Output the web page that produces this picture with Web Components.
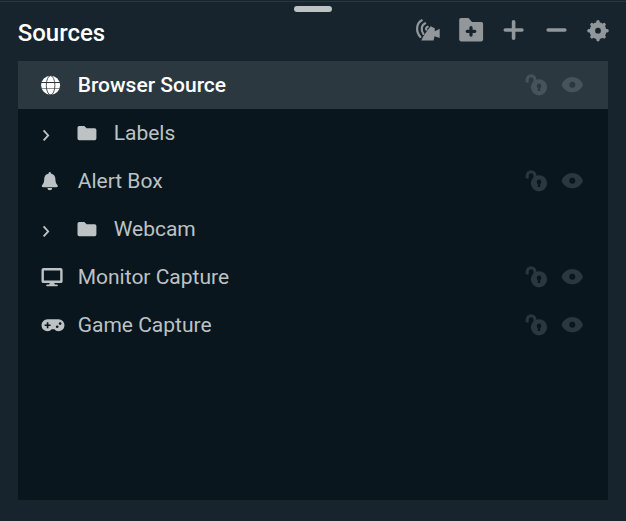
<!DOCTYPE html>
<html lang="en">
<head>
<meta charset="utf-8">
<title>Sources</title>
<style>
html,body{margin:0;height:100%;background:#17242d;overflow:hidden;font-family:Roboto,"Liberation Sans",sans-serif}
</style>
</head>
<body>
<sources-panel></sources-panel>
<script>
// Each entry: [width, height, markup]
const ICONS = {
  globe: [28,24,`<circle cx="12.6" cy="12.3" r="9.5" fill="currentColor"/><g fill="none" stroke="var(--cut)" stroke-width="1"><path d="M3 9.5h19.4"/><path d="M3 15.5h19.4" stroke-opacity=".55"/><ellipse cx="12.6" cy="12.3" rx="4.3" ry="9.6" stroke-opacity=".85"/></g>`],
  chevron: [24,24,`<path d="M5.6 9.400 10.200 14.400 5.600 19.400" fill="none" stroke="currentColor" stroke-width="1.8"/>`],
  folder: [28,24,`<path fill="currentColor" d="M5.2 5h5.1l2.4 2.200h8a1.700 1.700 0 0 1 1.700 1.700v8.600a1.700 1.700 0 0 1-1.700 1.700H5.200a1.700 1.700 0 0 1-1.700-1.700V6.700A1.700 1.700 0 0 1 5.200 5Z"/>`],
  bell: [28,24,`<path fill="currentColor" d="M10.700 4a1.100 1.100 0 0 1 2.200 0v.6c2.700.5 4.500 2.600 4.500 5.400 0 3.500.8 4.700 2 6 .9 1 .2 2.300-.9 2.300H5.100c-1.100 0-1.800-1.300-.9-2.300 1.200-1.300 2-2.500 2-6 0-2.800 1.800-4.900 4.500-5.400ZM9.400 18.900h4.800a2.400 2.300 0 0 1-4.800 0Z"/>`],
  monitor: [28,24,`<path fill="currentColor" fill-rule="evenodd" d="M5.400 3h17.300a1.900 1.900 0 0 1 1.900 1.900v11.300a1.900 1.900 0 0 1-1.900 1.900h-6.500l.6 1.500h2.200a.8.8 0 0 1 0 1.600H9a.8.8 0 0 1 0-1.600h2.200l.6-1.500H5.400a1.900 1.900 0 0 1-1.900-1.900V4.900A1.900 1.900 0 0 1 5.400 3Zm.5 2.400v10.200h16.300V5.400Z"/>`],
  gamepad: [28,24,`<path d="M9.500 6.200h11a6 6 0 0 1 0 12c-1.800 0-3.200-.7-4.200-1.900h-2.600c-1 1.200-2.400 1.900-4.200 1.900a6 6 0 0 1 0-12Z" fill="currentColor"/><g stroke="var(--cut)" stroke-width="1.600"><path d="M6.600 12.200h6M9.600 9.200v6"/></g><circle cx="19.200" cy="13.700" r="1.300" fill="var(--cut)"/><circle cx="22.100" cy="10.600" r="1.300" fill="var(--cut)"/>`],
  unlock: [24,24,`<path d="M3.200 9.400V6.600a3.900 3.900 0 0 1 7.800 0V9" fill="none" stroke="currentColor" stroke-width="3"/><circle cx="15" cy="14.300" r="8.100" fill="currentColor"/><circle cx="15" cy="12.900" r="2.300" fill="var(--cut)"/><path d="M14.100 13h1.800l.5 4.900h-2.800Z" fill="var(--cut)"/>`],
  eye: [24,24,`<path fill="currentColor" d="M1.600 11.700C3.300 7 7.500 4 12.300 4s9 3 10.700 7.700c-1.700 4.700-5.900 7.600-10.700 7.600s-9-2.900-10.700-7.600Z"/><circle cx="12.300" cy="11.700" r="3" fill="var(--cut)"/>`],
  cast: [28,28,`<g fill="none" stroke="currentColor" stroke-width="2.200" stroke-linecap="round"><path d="M7.800 4.300C1.900 7.700 1.700 15.900 6.400 20.900"/><path d="M11.200 7.300C7.200 9.200 6.700 14 9.400 17.800"/><path d="M13.700 10.800q-2.200.8-1.400 2.900"/></g><path fill="currentColor" d="M9.200 20.400 13.300 14.600 16.700 10.200 20.800 12.300V15.300L25.700 12.800V22.100L20.500 20.200 19.600 24.600H7.300Z"/>`],
  addFolder: [28,28,`<path fill="currentColor" d="M4 2h7.500l3.500 4h9.300a1.800 1.800 0 0 1 1.800 1.800v15.800a1.800 1.800 0 0 1-1.800 1.800H4a1.800 1.800 0 0 1-1.800-1.800V3.800A1.800 1.800 0 0 1 4 2Z"/><path d="M14 11.500v7.600M10.200 15.300h7.600" stroke="var(--cut)" stroke-width="3.200" stroke-linecap="round"/>`],
  plus: [28,28,`<path d="M14.600 5.700v16.600M6.300 14h16.600" stroke="currentColor" stroke-width="3.600" stroke-linecap="round"/>`],
  minus: [28,28,`<path d="M6.200 14h16.600" stroke="currentColor" stroke-width="3.600" stroke-linecap="round"/>`],
  gear: [28,28,`<circle cx="14" cy="14.700" r="5.700" fill="none" stroke="currentColor" stroke-width="5.600"/><g stroke="currentColor" stroke-width="3.400" stroke-linecap="round"><path d="M14 5.600v2M14 21.800v2M4.900 14.700h2M21.100 14.700h2M7.900 8.600l1.300 1.300M18.800 19.500l1.300 1.300M7.900 20.800l1.300-1.300M18.800 9.900l1.300-1.300"/></g>`]
};

class UiIcon extends HTMLElement {
  connectedCallback() {
    const [w, h, body] = ICONS[this.getAttribute('name')];
    this.attachShadow({mode:'open'}).innerHTML = `
      <style>:host{display:block;flex:none;width:${w}px;height:${h}px}svg{display:block}</style>
      <svg width="${w}" height="${h}" viewBox="0 0 ${w} ${h}" aria-hidden="true">${body}</svg>`;
  }
}
customElements.define('ui-icon', UiIcon);

class SourceItem extends HTMLElement {
  connectedCallback() {
    const folder = this.hasAttribute('folder');
    this.attachShadow({mode:'open'}).innerHTML = `
      <style>
        :host{--cut:#09161d;display:flex;align-items:center;gap:12px;box-sizing:border-box;height:48px;padding:0 24px 0 20px;color:#bdc2c4;font-size:21px;line-height:24px}
        :host([selected]){--cut:#2b383f;background:#2b383f;color:#fff;font-weight:500}
        .label{flex:1;white-space:nowrap;margin-left:-.3px}
        .actions{display:flex;gap:12px;color:#2b373e}
        :host([selected]) .actions{color:#46535a}
      </style>
      ${folder ? '<ui-icon name="chevron"></ui-icon>' : ''}
      <ui-icon name="${folder ? 'folder' : this.getAttribute('icon')}"></ui-icon>
      <span class="label"><slot></slot></span>
      ${folder ? '' : '<span class="actions"><ui-icon name="unlock"></ui-icon><ui-icon name="eye"></ui-icon></span>'}`;
  }
}
customElements.define('source-item', SourceItem);

class SourcesPanel extends HTMLElement {
  connectedCallback() {
    this.attachShadow({mode:'open'}).innerHTML = `
      <style>
        :host{--cut:#17242d;display:flex;flex-direction:column;box-sizing:border-box;width:626px;height:521px;padding:1px 18px 21px;background:#17242d}
        .grip{height:11px;margin:0 -18px;border-top:1px solid #2b383f;box-sizing:border-box;display:flex;justify-content:center;padding-top:4px}
        .grip i{width:38px;height:6px;border-radius:3px;background:#bdc2c4}
        header{height:49px;display:flex;justify-content:space-between;padding-top:4px;box-sizing:border-box}
        h1{margin:0 0 0 -.3px;color:#fff;font-size:24px;font-weight:500;line-height:34px}
        nav{display:flex;gap:14.5px;margin-right:-4px;color:#91979a}
        main{flex:1;background:#09161d}
      </style>
      <div class="grip"><i></i></div>
      <header><h1>Sources</h1>
        <nav><ui-icon name="cast"></ui-icon><ui-icon name="addFolder"></ui-icon><ui-icon name="plus"></ui-icon><ui-icon name="minus"></ui-icon><ui-icon name="gear"></ui-icon></nav>
      </header>
      <main>
        <source-item icon="globe" selected>Browser Source</source-item>
        <source-item folder>Labels</source-item>
        <source-item icon="bell">Alert Box</source-item>
        <source-item folder>Webcam</source-item>
        <source-item icon="monitor">Monitor Capture</source-item>
        <source-item icon="gamepad">Game Capture</source-item>
      </main>`;
  }
}
customElements.define('sources-panel', SourcesPanel);
</script>
</body>
</html>
